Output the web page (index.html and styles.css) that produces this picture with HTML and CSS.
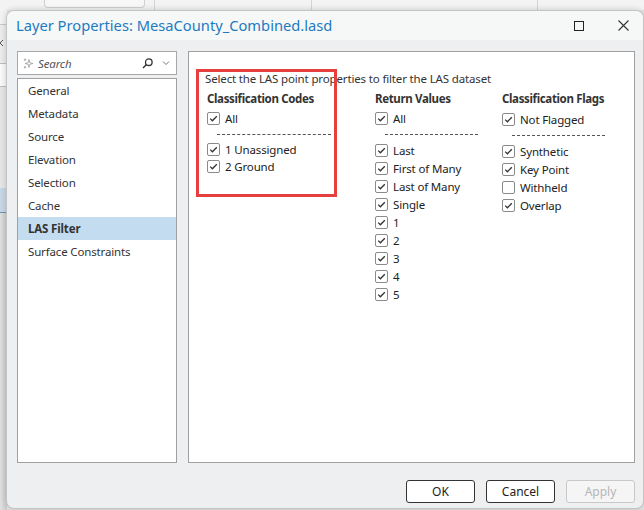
FILE: index.html
```html
<!DOCTYPE html>
<html>

<head>
  <title>Layer Properties</title>
  <link rel="stylesheet" href="styles.css">
</head>

<body>
  <div class="backdrop">
    <div class="topbar">
      <div class="tb-gap"></div>
      <div class="tb-box"></div>
      <div class="tb-sep sep-1"></div>
      <div class="tb-sep sep-2"></div>
      <div class="tb-sep sep-3"></div>
    </div>
    <div class="side">
      <div class="side-top"></div>
      <div class="side-x">
        <svg width="7" height="38" viewBox="0 0 7 38"><path d="M-3 15 L3 21 M3 15 L-3 21" stroke="#555" stroke-width="1"/></svg>
      </div>
      <div class="side-field"></div>
      <div class="side-fill"></div>
      <div class="side-sel"></div>
      <div class="side-rest"></div>
    </div>
  </div>

  <div class="dialog">
    <div class="titlebar">
      <span class="title">Layer Properties: MesaCounty_Combined.lasd</span>
      <svg class="win-max" width="10" height="10" viewBox="0 0 10 10"><rect x="0.5" y="0.5" width="9" height="9" fill="none" stroke="#222" stroke-width="1"/></svg>
      <svg class="win-close" width="11" height="11" viewBox="0 0 11 11"><path d="M0.5 0.5 L10.5 10.5 M10.5 0.5 L0.5 10.5" stroke="#333" stroke-width="1.1"/></svg>
    </div>

    <div class="body">
      <div class="nav">
        <div class="search">
          <svg class="sparkle" width="11" height="11" viewBox="0 0 11 11">
            <path d="M6 1.5 L6.8 4.7 L10 5.5 L6.8 6.3 L6 9.5 L5.2 6.3 L2 5.5 L5.2 4.7 Z" fill="none" stroke="#9a9a9a" stroke-width="0.8"/>
            <path d="M2 0.5 V3 M0.8 1.7 H3.2" stroke="#9a9a9a" stroke-width="0.8"/>
            <path d="M2 8 V10.5 M0.8 9.2 H3.2" stroke="#9a9a9a" stroke-width="0.8"/>
          </svg>
          <span class="search-text">Search</span>
          <svg class="glass" width="11" height="11" viewBox="0 0 11 11">
            <circle cx="6.8" cy="4.2" r="3.3" fill="none" stroke="#333" stroke-width="1.3"/>
            <path d="M4.4 6.6 L1 10" stroke="#333" stroke-width="1.4"/>
          </svg>
          <svg class="chev" width="8" height="6" viewBox="0 0 8 6"><path d="M1 1.5 L4 4.5 L7 1.5" fill="none" stroke="#666" stroke-width="0.9"/></svg>
        </div>
        <ul class="nav-list">
          <li>General</li>
          <li>Metadata</li>
          <li>Source</li>
          <li>Elevation</li>
          <li>Selection</li>
          <li>Cache</li>
          <li class="active">LAS Filter</li>
          <li>Surface Constraints</li>
        </ul>
      </div>

      <div class="panel">
        <div class="intro">Select the LAS point properties to filter the LAS dataset</div>
        <div class="columns">
          <div class="col col-codes">
            <div class="col-head">Classification Codes</div>
            <label class="check all"><span class="box on"></span>All</label>
            <div class="dash"></div>
            <label class="check"><span class="box on"></span>1 Unassigned</label>
            <label class="check"><span class="box on"></span>2 Ground</label>
          </div>
          <div class="col">
            <div class="col-head">Return Values</div>
            <label class="check all"><span class="box on"></span>All</label>
            <div class="dash"></div>
            <label class="check"><span class="box on"></span>Last</label>
            <label class="check"><span class="box on"></span>First of Many</label>
            <label class="check"><span class="box on"></span>Last of Many</label>
            <label class="check"><span class="box on"></span>Single</label>
            <label class="check"><span class="box on"></span>1</label>
            <label class="check"><span class="box on"></span>2</label>
            <label class="check"><span class="box on"></span>3</label>
            <label class="check"><span class="box on"></span>4</label>
            <label class="check"><span class="box on"></span>5</label>
          </div>
          <div class="col col-flags">
            <div class="col-head">Classification Flags</div>
            <label class="check all"><span class="box on"></span>Not Flagged</label>
            <div class="dash"></div>
            <label class="check"><span class="box on"></span>Synthetic</label>
            <label class="check"><span class="box on"></span>Key Point</label>
            <label class="check"><span class="box"></span>Withheld</label>
            <label class="check"><span class="box on"></span>Overlap</label>
          </div>
        </div>
        <!-- annotation around the classification codes -->
        <div class="highlight"></div>
      </div>
    </div>

    <div class="footer">
      <button type="button">OK</button>
      <button type="button">Cancel</button>
      <button type="button" class="disabled">Apply</button>
    </div>
  </div>
</body>

</html>
```

FILE: styles.css
```css
body {
  margin: 0;
  width: 644px;
  height: 510px;
  overflow: hidden;
  position: relative;
  font-family: "Noto Sans", "Open Sans", sans-serif;
  font-size: 11.5px;
  letter-spacing: -0.15px;
  color: #222;
  background-color: #e4e4e4;
}

/* app behind the dialog */
.backdrop {
  height: 510px;
}

.topbar {
  display: flex;
  height: 10px;
  background-color: #f3f3f3;
}

.tb-gap {
  width: 44px;
}

.tb-box {
  width: 99px;
  height: 7px;
  border: 1px solid #cfcfcf;
  border-top: none;
  border-radius: 0 0 4px 4px;
  background-color: #f7f7f7;
}

.tb-sep {
  width: 1px;
  background-color: #d4d4d4;
}

.sep-1 {
  margin-left: 9px;
}

.sep-2 {
  margin-left: 156px;
}

.sep-3 {
  margin-left: 225px;
}

.side {
  width: 7px;
  height: 500px;
  display: flex;
  flex-direction: column;
}

.side-top {
  height: 14px;
  background-color: #f3f3f3;
  border-bottom: 1px solid #c9c9c9;
}

.side-x {
  height: 38px;
  background-color: #ececec;
}

.side-x svg {
  display: block;
}

.side-field {
  height: 22px;
  background-color: #f9f9f9;
  border-top: 1px solid #bdbdbd;
  border-bottom: 1px solid #bdbdbd;
}

.side-fill {
  height: 101px;
  background-color: #e6e6e6;
}

.side-sel {
  height: 24px;
  background-color: #c7d7e6;
  border-bottom: 1px solid #6d93b8;
}

.side-rest {
  flex: 1;
  background: linear-gradient(to right, #e0e0e0, #cdcdcd);
}

/* dialog window */
.dialog {
  position: absolute;
  left: 6px;
  top: 10px;
  width: 636px;
  height: 497px;
  border: 1px solid #c4c4c4;
  border-radius: 8px;
  background-color: #eeeff0;
  box-shadow: 0 0 6px rgba(0, 0, 0, 0.18);
  display: flex;
  flex-direction: column;
  overflow: hidden;
}

.titlebar {
  height: 29px;
  display: flex;
  align-items: center;
  padding-left: 9px;
  background-color: #f6f7f7;
}

.title {
  flex: 1;
  font-size: 14.7px;
  letter-spacing: 0;
  color: #1d7bc2;
  padding-bottom: 1px;
}

.win-max {
  flex-shrink: 0;
  margin-right: 34px;
}

.win-close {
  flex-shrink: 0;
  margin-right: 14px;
}

.body {
  display: flex;
  gap: 11px;
  padding: 11px 8px 0 10px;
  height: 412px;
}

.nav {
  width: 160px;
  display: flex;
  flex-direction: column;
  gap: 3px;
}

.search {
  height: 22px;
  border: 1px solid #a8a8a8;
  background-color: #fff;
  display: flex;
  align-items: center;
  padding: 0 6px 0 5px;
}

.sparkle {
  margin-right: 4px;
}

.search-text {
  flex: 1;
  font-style: italic;
  color: #555;
}

.glass {
  margin-right: 9px;
}

.nav-list {
  flex: 1;
  margin: 0;
  padding: 0;
  list-style: none;
  background-color: #fff;
  border: 1px solid #a0a0a0;
}

.nav-list li {
  height: 23px;
  line-height: 23px;
  padding-left: 10px;
  color: #333;
}

.nav-list li.active {
  background-color: #c4dcef;
  font-weight: bold;
}

.panel {
  flex: 1;
  position: relative;
  background-color: #fff;
  border: 1px solid #a0a0a0;
}

.intro {
  padding: 18px 0 0 16px;
  line-height: 18px;
  color: #333;
}

.columns {
  display: grid;
  grid-template-columns: 168px 127px 1fr;
  padding: 2px 0 0 18px;
}

.col-head {
  font-weight: bold;
  letter-spacing: -0.35px;
  line-height: 18px;
  color: #333;
}

.check {
  display: flex;
  align-items: center;
  height: 18px;
  color: #222;
}

.check.all {
  height: 20px;
}

.col-codes .check {
  height: 17px;
}

.col-codes .check.all {
  height: 20px;
}

.col-flags .check.all {
  margin-top: 1px;
}

.col-flags .dash + .check {
  margin-top: 1px;
}

.box {
  width: 11px;
  height: 11px;
  border: 1px solid #8a8a8a;
  border-radius: 2px;
  background-color: #fff;
  margin-right: 5px;
  flex-shrink: 0;
}

.box.on {
  background-image: url("data:image/svg+xml;utf8,<svg xmlns='http://www.w3.org/2000/svg' width='11' height='11' viewBox='0 0 11 11'><path d='M2.2 5.6 L4.4 7.8 L8.8 3.2' fill='none' stroke='%23333' stroke-width='1.3'/></svg>");
}

.dash {
  width: 114px;
  margin: 6px 0 6px 10px;
  border-top: 1px dashed #555;
}

.col .dash {
  width: 93px;
}

.col-codes .dash {
  width: 114px;
}

.highlight {
  position: absolute;
  left: 7px;
  top: 17px;
  width: 135px;
  height: 122px;
  border: 3px solid #e5403d;
}

.footer {
  flex: 1;
  display: flex;
  justify-content: flex-end;
  align-items: flex-end;
  gap: 11px;
  padding: 0 8px 5px 0;
}

button {
  width: 69px;
  height: 23px;
  font-family: "Noto Sans", "Open Sans", sans-serif;
  font-size: 12px;
  color: #222;
  background-color: #fff;
  border: 1px solid #333;
  border-radius: 3px;
  padding: 0;
}

button.disabled {
  color: #b5b5b5;
  border-color: #c8c8c8;
  background-color: #f5f5f5;
}
```
